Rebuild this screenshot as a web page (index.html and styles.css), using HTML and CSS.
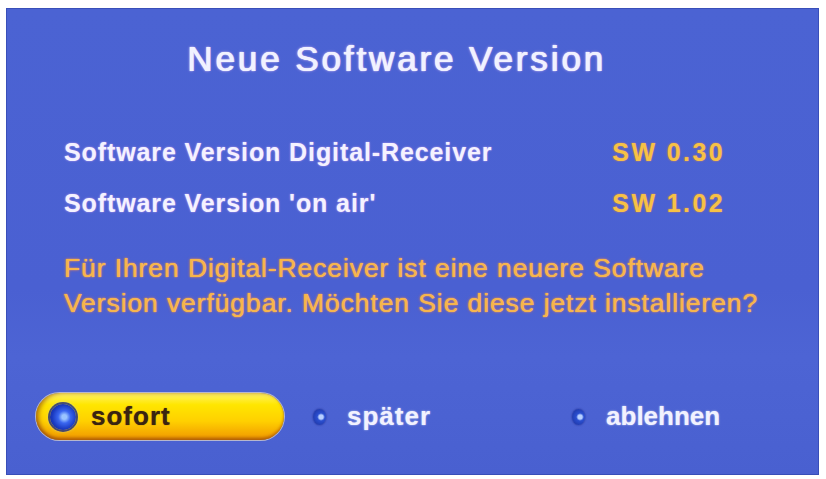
FILE: index.html
```html
<!DOCTYPE html>
<html lang="de">
<head>
<meta charset="utf-8">
<title>Neue Software Version</title>
<link rel="stylesheet" href="styles.css">
</head>
<body>
<div class="panel">
  <h1 class="title">Neue Software Version</h1>
  <div class="info">
    <div class="row"><span class="label">Software Version Digital-Receiver</span><span class="value">SW 0.30</span></div>
    <div class="row"><span class="label">Software Version 'on air'</span><span class="value">SW 1.02</span></div>
  </div>
  <p class="message">Für Ihren Digital-Receiver ist eine neuere Software<br>Version verfügbar. Möchten Sie diese jetzt installieren?</p>
  <div class="buttons">
    <div class="btn btn-active"><span class="dot dot-big"></span><span class="btn-text">sofort</span></div>
    <div class="btn btn-later"><span class="dot"></span><span class="btn-text">später</span></div>
    <div class="btn btn-decline"><span class="dot"></span><span class="btn-text">ablehnen</span></div>
  </div>
</div>
</body>
</html>
```
FILE: styles.css
```css
html, body {
  margin: 0;
  padding: 0;
  background: #ffffff;
  width: 826px;
  height: 479px;
  overflow: hidden;
}
.panel {
  box-sizing: border-box;
  margin: 8px 0 0 6px;
  width: 813px;
  height: 467px;
  background: linear-gradient(180deg, #4b63d3 0%, #4a60d2 60%, #4d64d4 75%, #4960d0 100%);
  display: flex;
  flex-direction: column;
  font-family: "Liberation Sans", Arial, sans-serif;
  box-shadow: inset 0 0 0 1px rgba(40, 60, 160, 0.5);
}
.title {
  margin: 36px 0 0 181px;
  font-size: 35px;
  font-weight: 400;
  letter-spacing: 2.9px;
  line-height: 30px;
  color: #f1f2ff;
  text-shadow: 0 0 1px #ffffff, 1px 0 0 #d8dcff, 0 0 3px rgba(255, 200, 255, 0.6);
}
.info {
  margin: 63px 96px 0 58px;
  display: flex;
  flex-direction: column;
  gap: 21px;
}
.row {
  display: flex;
  justify-content: space-between;
  align-items: center;
  height: 30px;
  font-size: 25px;
  font-weight: 700;
  letter-spacing: 0.9px;
}
.label {
  color: #f4f2ff;
  text-shadow: 0 0 2px rgba(255, 190, 255, 0.7);
}
.value {
  color: #f6c245;
  letter-spacing: 2.4px;
  margin-right: -2px;
  text-shadow: 0 0 2px rgba(255, 140, 60, 0.8);
}
.message {
  margin: 33px 0 0 58px;
  font-size: 26.5px;
  line-height: 35px;
  color: #f7b54a;
  letter-spacing: 0.9px;
  text-shadow: 0 0 1px #ffd070, 0 0 3px rgba(255, 120, 60, 0.8);
}
.buttons {
  margin: 72px 0 0 30px;
  display: flex;
  align-items: center;
  height: 47px;
}
.btn {
  display: flex;
  align-items: center;
  font-size: 26px;
  font-weight: 700;
  letter-spacing: 1px;
}
.btn-active {
  box-sizing: border-box;
  width: 248px;
  height: 47px;
  border-radius: 24px;
  padding-left: 14px;
  background: linear-gradient(180deg, #fff36a 0%, #ffe600 25%, #ffd000 60%, #f4a400 90%, #e08a00 100%);
  box-shadow: 0 0 0 1px rgba(255, 240, 200, 0.6), inset 3px 0 4px rgba(140, 70, 20, 0.6), inset 0 -2px 3px rgba(170, 80, 0, 0.6);
}
.btn-active .btn-text {
  color: #3a2410;
  margin-left: 15px;
  text-shadow: 0 0 1px #6a4a20;
}
.dot {
  box-sizing: border-box;
  display: inline-block;
  width: 13px;
  height: 16px;
  border-radius: 50%;
  background: radial-gradient(circle at 62% 50%, #b8d0ff 0 18%, #2a4fd0 34%, #1c2f9a 100%);
  box-shadow: 0 0 2px rgba(20, 30, 120, 0.8);
}
.dot-big {
  width: 26px;
  height: 26px;
  background: radial-gradient(circle at 55% 50%, #9ac4ff 0 12%, #3a66f0 32%, #1a3ac0 62%, #14208a 100%);
  box-shadow: 0 0 0 2px rgba(30, 40, 120, 0.8), 0 0 3px 2px rgba(200, 220, 180, 0.6);
}
.btn-later {
  margin-left: 29px;
}
.btn-decline {
  margin-left: 141px;
  letter-spacing: 0;
}
.btn-later .btn-text,
.btn-decline .btn-text {
  color: #f2f2ff;
  margin-left: 21px;
  text-shadow: 0 0 2px rgba(255, 255, 255, 0.7);
}
```
